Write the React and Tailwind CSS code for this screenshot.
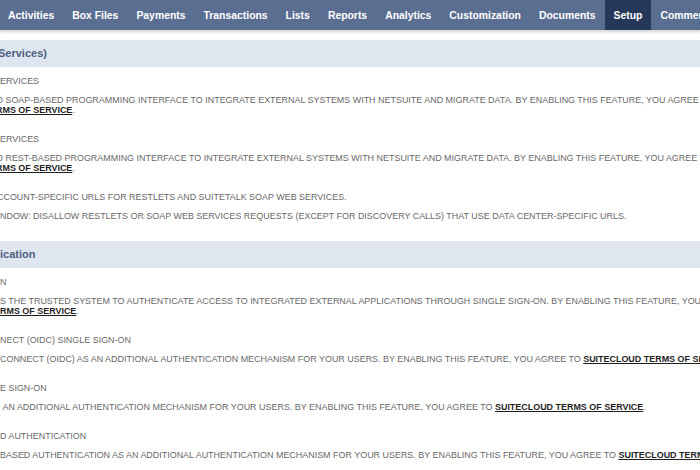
import React from "react";

const navItems = [
  "Activities",
  "Box Files",
  "Payments",
  "Transactions",
  "Lists",
  "Reports",
  "Analytics",
  "Customization",
  "Documents",
  "Setup",
  "Commerce",
];

const Link = ({ children }) => (
  <span className="font-bold text-[#1f1f1f] underline underline-offset-1">{children}</span>
);

const sections = [
  {
    title: "Services)",
    titleShift: "-ml-[2px]",
    features: [
      {
        title: "ERVICES",
        shift: "ml-0",
        desc: [
          <>
            O SOAP-BASED PROGRAMMING INTERFACE TO INTEGRATE EXTERNAL SYSTEMS WITH NETSUITE AND MIGRATE DATA. BY
            ENABLING THIS FEATURE, YOU AGREE TO
          </>,
          <>
            <Link>RMS OF SERVICE</Link>.
          </>,
        ],
        descShift: "-ml-[4px]",
      },
      {
        title: "ERVICES",
        shift: "ml-0",
        desc: [
          <>
            O REST-BASED PROGRAMMING INTERFACE TO INTEGRATE EXTERNAL SYSTEMS WITH NETSUITE AND MIGRATE DATA. BY
            ENABLING THIS FEATURE, YOU AGREE TO
          </>,
          <>
            <Link>RMS OF SERVICE</Link>.
          </>,
        ],
        descShift: "-ml-[4px]",
      },
      {
        title: "CCOUNT-SPECIFIC URLS FOR RESTLETS AND SUITETALK SOAP WEB SERVICES.",
        shift: "-ml-[3px]",
        desc: [<>NDOW: DISALLOW RESTLETS OR SOAP WEB SERVICES REQUESTS (EXCEPT FOR DISCOVERY CALLS) THAT USE DATA CENTER-SPECIFIC URLS.</>],
        descShift: "ml-0",
      },
    ],
  },
  {
    title: "ication",
    titleShift: "ml-0",
    features: [
      {
        title: "N",
        shift: "ml-0",
        desc: [
          <>
            S THE TRUSTED SYSTEM TO AUTHENTICATE ACCESS TO INTEGRATED EXTERNAL APPLICATIONS THROUGH SINGLE SIGN-ON. BY
            ENABLING THIS FEATURE, YOU AGREE TO
          </>,
          <>
            <Link>RMS OF SERVICE</Link>.
          </>,
        ],
        descShift: "ml-0",
      },
      {
        title: "NECT (OIDC) SINGLE SIGN-ON",
        shift: "ml-0",
        desc: [
          <>
            CONNECT (OIDC) AS AN ADDITIONAL AUTHENTICATION MECHANISM FOR YOUR USERS. BY ENABLING THIS FEATURE, YOU AGREE
            TO <Link>SUITECLOUD TERMS OF SERVICE</Link>.
          </>,
        ],
        descShift: "ml-0",
      },
      {
        title: "E SIGN-ON",
        shift: "ml-0",
        desc: [
          <>
            &nbsp;AN ADDITIONAL AUTHENTICATION MECHANISM FOR YOUR USERS. BY ENABLING THIS FEATURE, YOU AGREE TO{" "}
            <Link>SUITECLOUD TERMS OF SERVICE</Link>.
          </>,
        ],
        descShift: "ml-0",
      },
      {
        title: "D AUTHENTICATION",
        shift: "ml-0",
        desc: [
          <>
            BASED AUTHENTICATION AS AN ADDITIONAL AUTHENTICATION MECHANISM FOR YOUR USERS. BY ENABLING THIS FEATURE, YOU
            AGREE TO <Link>SUITECLOUD TERMS OF SERVICE</Link>.
          </>,
        ],
        descShift: "ml-0",
      },
    ],
  },
];

function Feature({ feature }) {
  return (
    <div className="mt-[19px] first:mt-[9px]">
      <div className={`h-[10px] leading-[10px] whitespace-nowrap ${feature.shift}`}>{feature.title}</div>
      <div className={`mt-[9px] ${feature.descShift}`}>
        {feature.desc.map((line, i) => (
          <div key={i} className="h-[10px] leading-[10px] whitespace-nowrap">
            {line}
          </div>
        ))}
      </div>
    </div>
  );
}

export default function App() {
  return (
    <div className="w-[700px] h-[470px] overflow-hidden bg-white font-['Liberation_Sans',Arial,sans-serif]">
      <nav className="h-[30px] bg-[#5a6e92] flex items-stretch -ml-px shadow-[0_2px_3px_rgba(0,0,0,0.18)] relative z-10">
        {navItems.map((item) => (
          <div
            key={item}
            className={`px-[9px] pt-px flex items-center whitespace-nowrap text-[10.4px] font-bold text-white ${
              item === "Setup" ? "bg-[#263859]" : ""
            }`}
          >
            {item}
          </div>
        ))}
      </nav>
      <div className="pt-[10px]">
        {sections.map((section, si) => (
          <section key={si} className={si > 0 ? "mt-[20px]" : ""}>
            <div className="h-[27px] bg-[#e0e6ef] flex items-center">
              <span className={`text-[11px] font-bold text-[#4c5f82] ${section.titleShift}`}>{section.title}</span>
            </div>
            <div className="text-[8.95px] text-[#686868]">
              {section.features.map((f, fi) => (
                <Feature key={fi} feature={f} />
              ))}
            </div>
          </section>
        ))}
      </div>
    </div>
  );
}
